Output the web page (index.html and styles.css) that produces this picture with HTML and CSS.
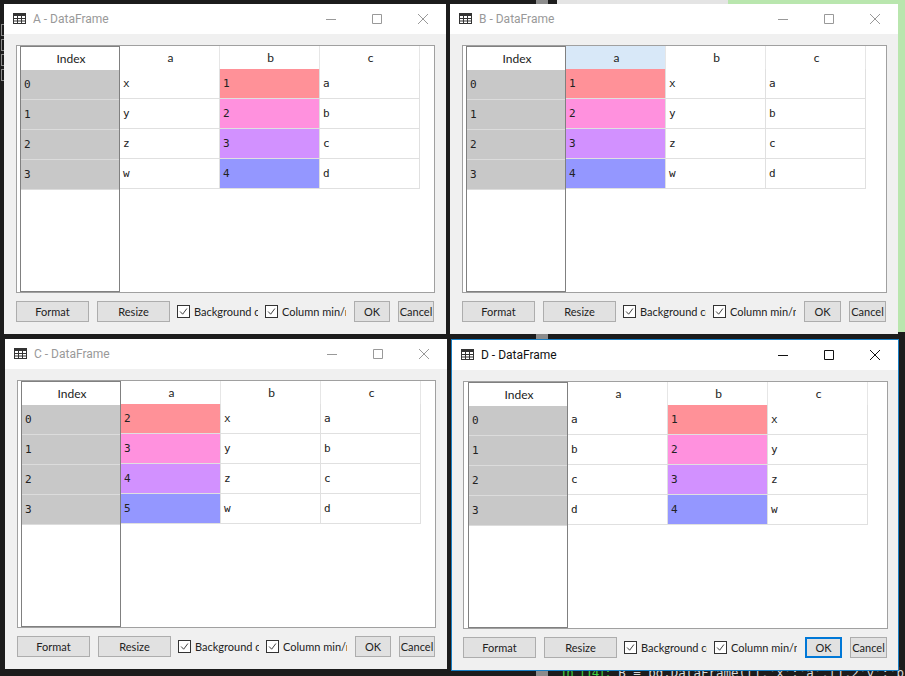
FILE: index.html
```html
<!DOCTYPE html>
<html lang="en">
<head>
    <meta charset="UTF-8">
    <meta name="viewport" content="width=device-width, initial-scale=1.0">
    <title>DataFrame windows</title>
    <link rel="stylesheet" href="styles.css">
</head>
<body>

    <svg class="sprites" xmlns="http://www.w3.org/2000/svg">
        <symbol id="i-table" viewBox="0 0 13 11">
            <path d="M0 0h13v11H0z M1 3v2h3V3z M5 3v2h3V3z M9 3v2h3V3z M1 6v1.500h3V6z M5 6v1.500h3V6z M9 6v1.500h3V6z M1 8.500v1.500h3V8.500z M5 8.500v1.500h3V8.500z M9 8.500v1.500h3V8.500z" fill-rule="evenodd" fill="currentColor"/>
        </symbol>
        <symbol id="i-min" viewBox="0 0 12 12"><path d="M1 6.500h10" stroke="currentColor" fill="none"/></symbol>
        <symbol id="i-max" viewBox="0 0 12 12"><path d="M1.500 1.500h9v9h-9z" stroke="currentColor" fill="none"/></symbol>
        <symbol id="i-close" viewBox="0 0 12 12"><path d="M1 1l10 10M11 1L1 11" stroke="currentColor" fill="none"/></symbol>
        <symbol id="i-check" viewBox="0 0 13 13"><path d="M2.500 6.500l3 3.200 5-6.700" stroke="#333" stroke-width="1.100" fill="none"/></symbol>
    </svg>

    <!-- desktop behind the windows -->
    <div class="backdrop">
        <div class="bg-green"></div>
        <div class="bg-light"></div>
        <div class="bg-scroll"></div>
        <div class="bg-marks"><i></i><i></i><i></i><i></i></div>
        <div class="bg-code"><span class="prompt">In [14]:</span> B = pd.DataFrame([],'x':'a',[1,2'y':'b'</div>
    </div>

    <!-- A -->
    <div class="window win-a">
        <div class="titlebar">
            <svg class="title-icon"><use href="#i-table"/></svg>
            <span class="title-text">A - DataFrame</span>
            <div class="controls">
                <svg><use href="#i-min"/></svg><svg><use href="#i-max"/></svg><svg><use href="#i-close"/></svg>
            </div>
        </div>
        <div class="content">
            <div class="frame">
                <div class="index">
                    <div class="head">Index</div>
                    <div class="idx">0</div><div class="idx">1</div><div class="idx">2</div><div class="idx">3</div>
                </div>
                <div class="cells">
                    <div class="head">a</div><div class="head">b</div><div class="head">c</div>
                    <div class="cell">x</div><div class="cell c1">1</div><div class="cell">a</div>
                    <div class="cell">y</div><div class="cell c2">2</div><div class="cell">b</div>
                    <div class="cell">z</div><div class="cell c3">3</div><div class="cell">c</div>
                    <div class="cell">w</div><div class="cell c4">4</div><div class="cell">d</div>
                </div>
            </div>
            <div class="toolbar">
                <button class="btn btn-wide">Format</button>
                <button class="btn btn-wide">Resize</button>
                <div class="check"><span class="box"><svg><use href="#i-check"/></svg></span><span class="label">Background color</span></div>
                <div class="check"><span class="box"><svg><use href="#i-check"/></svg></span><span class="label">Column min/max</span></div>
                <button class="btn btn-small">OK</button>
                <button class="btn btn-small">Cancel</button>
            </div>
        </div>
    </div>

    <!-- B -->
    <div class="window win-b">
        <div class="titlebar">
            <svg class="title-icon"><use href="#i-table"/></svg>
            <span class="title-text">B - DataFrame</span>
            <div class="controls">
                <svg><use href="#i-min"/></svg><svg><use href="#i-max"/></svg><svg><use href="#i-close"/></svg>
            </div>
        </div>
        <div class="content">
            <div class="frame">
                <div class="index">
                    <div class="head">Index</div>
                    <div class="idx">0</div><div class="idx">1</div><div class="idx">2</div><div class="idx">3</div>
                </div>
                <div class="cells">
                    <div class="head head-selected">a</div><div class="head">b</div><div class="head">c</div>
                    <div class="cell c1">1</div><div class="cell">x</div><div class="cell">a</div>
                    <div class="cell c2">2</div><div class="cell">y</div><div class="cell">b</div>
                    <div class="cell c3">3</div><div class="cell">z</div><div class="cell">c</div>
                    <div class="cell c4">4</div><div class="cell">w</div><div class="cell">d</div>
                </div>
            </div>
            <div class="toolbar">
                <button class="btn btn-wide">Format</button>
                <button class="btn btn-wide">Resize</button>
                <div class="check"><span class="box"><svg><use href="#i-check"/></svg></span><span class="label">Background color</span></div>
                <div class="check"><span class="box"><svg><use href="#i-check"/></svg></span><span class="label">Column min/max</span></div>
                <button class="btn btn-small">OK</button>
                <button class="btn btn-small">Cancel</button>
            </div>
        </div>
    </div>

    <!-- C -->
    <div class="window win-c">
        <div class="titlebar">
            <svg class="title-icon"><use href="#i-table"/></svg>
            <span class="title-text">C - DataFrame</span>
            <div class="controls">
                <svg><use href="#i-min"/></svg><svg><use href="#i-max"/></svg><svg><use href="#i-close"/></svg>
            </div>
        </div>
        <div class="content">
            <div class="frame">
                <div class="index">
                    <div class="head">Index</div>
                    <div class="idx">0</div><div class="idx">1</div><div class="idx">2</div><div class="idx">3</div>
                </div>
                <div class="cells">
                    <div class="head">a</div><div class="head">b</div><div class="head">c</div>
                    <div class="cell c1">2</div><div class="cell">x</div><div class="cell">a</div>
                    <div class="cell c2">3</div><div class="cell">y</div><div class="cell">b</div>
                    <div class="cell c3">4</div><div class="cell">z</div><div class="cell">c</div>
                    <div class="cell c4">5</div><div class="cell">w</div><div class="cell">d</div>
                </div>
            </div>
            <div class="toolbar">
                <button class="btn btn-wide">Format</button>
                <button class="btn btn-wide">Resize</button>
                <div class="check"><span class="box"><svg><use href="#i-check"/></svg></span><span class="label">Background color</span></div>
                <div class="check"><span class="box"><svg><use href="#i-check"/></svg></span><span class="label">Column min/max</span></div>
                <button class="btn btn-small">OK</button>
                <button class="btn btn-small">Cancel</button>
            </div>
        </div>
    </div>

    <!-- D, the active window -->
    <div class="window win-d">
        <div class="titlebar">
            <svg class="title-icon"><use href="#i-table"/></svg>
            <span class="title-text">D - DataFrame</span>
            <div class="controls">
                <svg><use href="#i-min"/></svg><svg><use href="#i-max"/></svg><svg><use href="#i-close"/></svg>
            </div>
        </div>
        <div class="content">
            <div class="frame">
                <div class="index">
                    <div class="head">Index</div>
                    <div class="idx">0</div><div class="idx">1</div><div class="idx">2</div><div class="idx">3</div>
                </div>
                <div class="cells">
                    <div class="head">a</div><div class="head">b</div><div class="head">c</div>
                    <div class="cell">a</div><div class="cell c1">1</div><div class="cell">x</div>
                    <div class="cell">b</div><div class="cell c2">2</div><div class="cell">y</div>
                    <div class="cell">c</div><div class="cell c3">3</div><div class="cell">z</div>
                    <div class="cell">d</div><div class="cell c4">4</div><div class="cell">w</div>
                </div>
            </div>
            <div class="toolbar">
                <button class="btn btn-wide">Format</button>
                <button class="btn btn-wide">Resize</button>
                <div class="check"><span class="box"><svg><use href="#i-check"/></svg></span><span class="label">Background color</span></div>
                <div class="check"><span class="box"><svg><use href="#i-check"/></svg></span><span class="label">Column min/max</span></div>
                <button class="btn btn-small btn-default">OK</button>
                <button class="btn btn-small">Cancel</button>
            </div>
        </div>
    </div>

</body>
</html>
```

FILE: styles.css
```css
html, body {
    margin: 0;
    height: 100%;
}

body {
    position: relative;
    width: 905px;
    height: 676px;
    overflow: hidden;
    background-color: #1c1c1c;
    font-family: 'Lato', sans-serif;
    font-size: 12px;
    color: #222;
}

.sprites {
    display: none;
}

/* desktop pieces that show between the windows */
.bg-green {
    position: absolute;
    left: 728px;
    top: 0;
    width: 177px;
    height: 332px;
    background-color: #b9e6ae;
}

.bg-light {
    position: absolute;
    left: 557px;
    top: 0;
    width: 171px;
    height: 332px;
    background-color: #e4e4e4;
}

.bg-scroll {
    position: absolute;
    left: 536px;
    top: 0;
    width: 12px;
    height: 676px;
    background-color: #8c8c8c;
}

.bg-marks {
    position: absolute;
    left: 1px;
    top: 24px;
    display: flex;
    flex-direction: column;
    gap: 3px;
}

.bg-marks i {
    display: block;
    width: 4px;
    height: 10px;
    border: 1px solid #8a8a8a;
}

.bg-code {
    position: absolute;
    left: 560px;
    top: 665px;
    font-family: 'DejaVu Sans Mono', monospace;
    font-size: 12.5px;
    line-height: 16px;
    white-space: pre;
    color: #d8d8d8;
}

.prompt {
    letter-spacing: -1.2px;
    color: #3fce3f;
}

/* windows, free on the desktop */
.window {
    position: absolute;
    box-sizing: border-box;
    display: flex;
    flex-direction: column;
    background-color: #f0f0f0;
}

.win-a {
    left: 4px;
    top: 4px;
    width: 442px;
    height: 330px;
}

.win-b {
    left: 450px;
    top: 4px;
    width: 448px;
    height: 330px;
}

.win-c {
    left: 5px;
    top: 339px;
    width: 442px;
    height: 330px;
}

.win-d {
    left: 451px;
    top: 339px;
    width: 448px;
    height: 332px;
    border: 1px solid #1a7fc4;
}

.titlebar {
    flex: none;
    display: flex;
    align-items: center;
    height: 30px;
    background-color: #fff;
    color: #999;
}

.title-icon {
    width: 13px;
    height: 11px;
    margin-left: 9px;
    margin-top: -1px;
    color: #333;
}

.title-text {
    margin-left: 7px;
    margin-top: -1px;
    font-family: 'Roboto', sans-serif;
}

.controls {
    margin-left: auto;
    display: flex;
    align-items: center;
    gap: 34px;
    margin-right: 17px;
    color: #999;
}

.controls svg {
    width: 12px;
    height: 12px;
}

.win-d .title-text,
.win-d .controls {
    color: #111;
}

.content {
    flex: 1;
    min-height: 0;
    display: flex;
    flex-direction: column;
    gap: 8px;
    padding: 11px 11px 12px 12px;
}

.win-d .content {
    padding-left: 11px;
    padding-right: 10px;
}

.frame {
    flex: 1;
    display: flex;
    padding: 0 0 0 3px;
    background-color: #fff;
    border: 1px solid #a0a0a0;
}

.win-d .frame {
    padding-left: 4px;
}

.index {
    box-sizing: border-box;
    width: 100px;
    flex: none;
    border: 1px solid #808080;
}

.head {
    box-sizing: border-box;
    height: 23px;
    line-height: 24px;
    padding-left: 2px;
    text-align: center;
    background-color: #fff;
}

.head-selected {
    background-color: #d8e8f8;
}

.idx {
    box-sizing: border-box;
    height: 30px;
    line-height: 30px;
    padding-left: 3px;
    background-color: #c8c8c8;
    border-bottom: 1px solid #dcdcdc;
    font-family: 'DejaVu Sans Mono', monospace;
    font-size: 11px;
}

.cells {
    display: grid;
    grid-template-columns: repeat(3, 100px);
    grid-auto-rows: min-content;
}

.cells .head {
    border-right: 1px solid #e6e6e6;
}

.cell {
    box-sizing: border-box;
    height: 30px;
    line-height: 29px;
    padding-left: 3px;
    background-color: #fff;
    border-right: 1px solid #e0e0e0;
    border-bottom: 1px solid #e0e0e0;
    font-family: 'DejaVu Sans Mono', monospace;
    font-size: 11px;
}

.c1 { background-color: #ff9198; }
.c2 { background-color: #ff91de; }
.c3 { background-color: #d291ff; }
.c4 { background-color: #9497ff; }

.toolbar {
    flex: none;
    display: flex;
    align-items: center;
    gap: 8px;
    height: 21px;
    padding-right: 1px;
}

.btn {
    box-sizing: border-box;
    flex: none;
    height: 21px;
    padding: 0;
    overflow: hidden;
    background-color: #e1e1e1;
    border: 1px solid #adadad;
    font-family: inherit;
    font-size: 11px;
    color: #222;
    white-space: nowrap;
}

.btn-wide {
    width: 73px;
}

.btn-small {
    width: 36px;
}

.win-b .btn-small,
.win-d .btn-small {
    width: 37px;
}

.btn-default {
    border: 2px solid #0078d7;
}

.check {
    flex: 1;
    min-width: 0;
    display: flex;
    align-items: center;
    gap: 4px;
    overflow: hidden;
    margin-left: -1px;
}

.box {
    flex: none;
    box-sizing: border-box;
    width: 13px;
    height: 13px;
    background-color: #fff;
    border: 1px solid #333;
}

.box svg {
    display: block;
    width: 11px;
    height: 11px;
}

.label {
    font-size: 11px;
    white-space: nowrap;
}
```
